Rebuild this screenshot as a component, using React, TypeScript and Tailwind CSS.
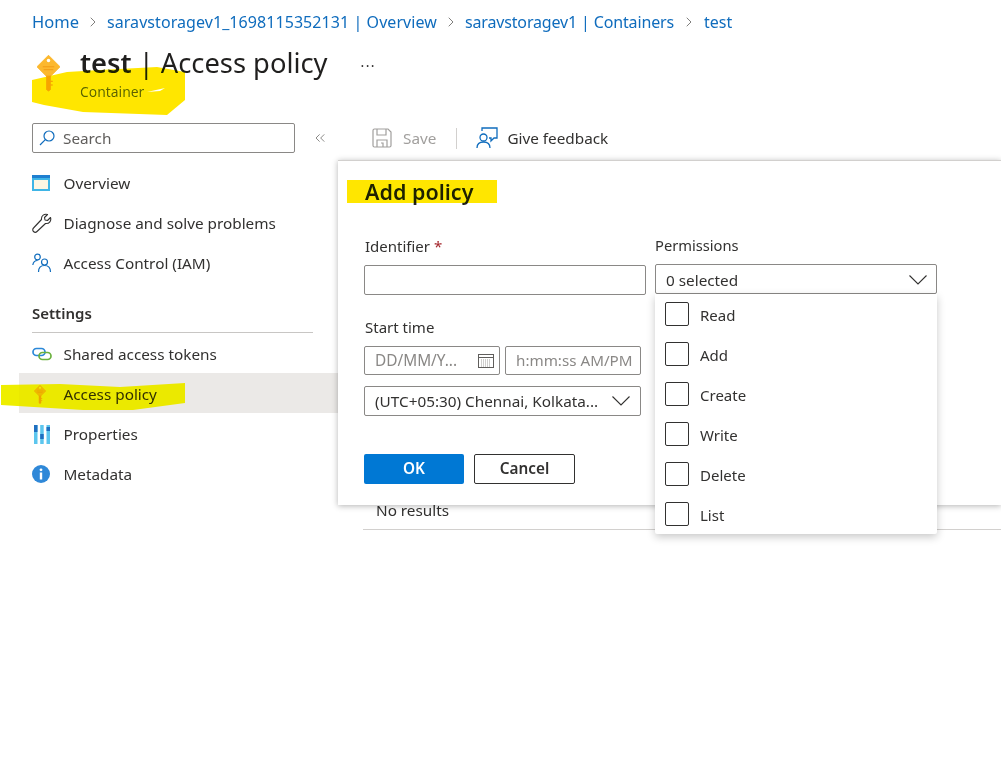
import { ChevronRight, ChevronsLeft } from "lucide-react"

const font = { fontFamily: '"Noto Sans", "Open Sans", sans-serif' }

function KeyIcon({ className }: { className: string }) {
  return (
    <svg viewBox="0 0 24 38" className={className}>
      <path d="M12 0 L24 12 L12 24 L0 12 Z" fill="#fcb82e" stroke="#fcb82e" strokeWidth="1" strokeLinejoin="round" />
      <circle cx="12" cy="5.5" r="1.8" fill="#fff" />
      <path d="M6 12h12M7 15h10" stroke="#f29a13" strokeWidth="1" />
      <path d="M9.5 21h5v15l-2.5 2-2.5-2z" fill="#f7a41d" />
      <path d="M14 27h2.5M14 31h2.5" stroke="#f7a41d" strokeWidth="1.5" />
    </svg>
  )
}

function SearchIcon() {
  return (
    <svg viewBox="0 0 16 16" className="mr-2 h-4 w-4 shrink-0" fill="none" stroke="#0f6cbd" strokeWidth="1.2">
      <circle cx="10" cy="6" r="5" />
      <path d="M6.300 9.700 1 15" />
    </svg>
  )
}

function Caret() {
  return (
    <svg viewBox="0 0 18 10" className="h-[10px] w-[18px] shrink-0" fill="none" stroke="#323130" strokeWidth="1.100">
      <path d="M.5 .5 9 9 17.500 .5" />
    </svg>
  )
}

function OverviewIcon() {
  return (
    <svg viewBox="0 0 18 16" className="h-4 w-[18px]">
      <rect width="18" height="16" fill="#3fb5e6" />
      <rect width="18" height="3" fill="#1f7fd0" />
      <rect x="2" y="5" width="14" height="9" fill="#fdf6e3" />
    </svg>
  )
}

function WrenchIcon() {
  return (
    <svg viewBox="0 0 20 20" className="h-5 w-5" fill="none" stroke="#323130" strokeWidth="1.100">
      <path d="M18.500 4.500 15.500 7.500 13 7 12.500 4.500 15.500 1.500C12.500 .5 9 2.500 9.500 6.500L1.500 15C.5 16 .5 17.500 1.500 18.500S4 19.500 5 18.500L13.500 10.500C17.500 11 19.500 7.500 18.500 4.500Z" strokeLinejoin="round" />
    </svg>
  )
}

function PeopleIcon() {
  return (
    <svg viewBox="0 0 20 20" className="h-5 w-5" fill="none" stroke="#0f6cbd" strokeWidth="1.200">
      <circle cx="5.500" cy="4" r="2.800" />
      <path d="M.8 12c.5-3 2-4.500 4.700-4.500" />
      <circle cx="12.500" cy="9" r="3" />
      <path d="M6.500 19c0-4 2-6.500 6-6.500s6 2.500 6 6.500" />
    </svg>
  )
}

function LinkIcon() {
  return (
    <svg viewBox="0 0 20 14" className="h-[14px] w-5" fill="none" strokeWidth="1.700">
      <rect x="1" y="1.500" width="12" height="7" rx="3.500" stroke="#2b88d8" />
      <rect x="7" y="5.500" width="12" height="7" rx="3.500" stroke="#6bb13f" />
    </svg>
  )
}

function PropertiesIcon() {
  return (
    <svg viewBox="0 0 16 19" className="ml-[2px] h-[19px] w-4">
      <rect x="0" y="0" width="3.500" height="19" fill="#5cc6ee" />
      <rect x="0" y="0" width="3.500" height="7" fill="#1f6fc0" />
      <rect x="6.200" y="0" width="3.500" height="19" fill="#5cc6ee" />
      <rect x="6.200" y="9" width="3.500" height="5" fill="#1f6fc0" />
      <rect x="12.500" y="0" width="3.500" height="19" fill="#5cc6ee" />
      <rect x="12.500" y="2" width="3.500" height="4" fill="#1f6fc0" />
    </svg>
  )
}

function InfoIcon() {
  return (
    <svg viewBox="0 0 18 18" className="h-[18px] w-[18px]">
      <circle cx="9" cy="9" r="9" fill="#2f88d8" />
      <circle cx="9" cy="4.800" r="1.400" fill="#fff" />
      <rect x="7.800" y="7.500" width="2.400" height="7" fill="#fff" />
    </svg>
  )
}

function SaveIcon() {
  return (
    <svg viewBox="0 0 20 20" className="h-5 w-5" fill="none" stroke="#a19f9d" strokeWidth="1.200">
      <path d="M1 2.500A1.500 1.500 0 0 1 2.500 1H16l3 3v13.500a1.500 1.500 0 0 1-1.500 1.500h-15A1.500 1.500 0 0 1 1 17.500Z" />
      <path d="M5 1v6h9V1M5 19v-7h10v7M9 15h2v4" />
    </svg>
  )
}

function FeedbackIcon() {
  return (
    <svg viewBox="0 0 22 22" className="h-[22px] w-[22px]" fill="none" stroke="#0f6cbd" strokeWidth="1.300">
      <circle cx="7.500" cy="10.500" r="3.500" />
      <path d="M1 21c0-4 2.500-6 6.500-6s6.500 2 6.500 6" />
      <path d="M6 4V1h15v10h-3l-3 3v-3h-2" />
    </svg>
  )
}

function CalendarIcon() {
  return (
    <svg viewBox="0 0 16 15" className="h-[15px] w-4" fill="none" stroke="#605e5c" strokeWidth="1">
      <rect x=".5" y="1.500" width="15" height="13" />
      <path d="M.5 4.500h15" />
      <path d="M3 7h10M3 9h10M3 11h10M3 13h10" stroke="#a19f9d" strokeDasharray="1 1" />
    </svg>
  )
}

function NavItem({ icon, label, active, low }: { icon: React.ReactNode; label: string; active?: boolean; low?: boolean }) {
  return (
    <div className={`ml-[19px] flex h-10 items-center ${low ? "pt-[2px]" : ""} ${active ? "bg-[#ebe9e7]" : ""}`}>
      <div className="ml-[13px] flex w-[31.500px] shrink-0 items-center">{icon}</div>
      <span className="text-[15.300px] text-[#323130]">{label}</span>
    </div>
  )
}

function FieldBox({ className, children }: { className: string; children?: React.ReactNode }) {
  return <div className={`flex items-center rounded-[2px] border border-[#8a8886] ${className}`}>{children}</div>
}

const crumbs = [
  { label: "saravstoragev1_1698115352131 | Overview", cls: "tracking-[0.07px]", chevron: "mx-[6px]" },
  { label: "saravstoragev1 | Containers", cls: "tracking-[-0.15px]", chevron: "mx-[6px]" },
  { label: "test", cls: "", chevron: "mx-[7px]" },
]
const permissions = ["Read", "Add", "Create", "Write", "Delete", "List"]

export default function App() {
  return (
    <div style={font} className="relative h-[776px] w-[1001px] overflow-hidden bg-white">
      {/* Breadcrumb */}
      <div className="flex h-11 items-center pl-8 text-[16px] text-[#0f6cbd]">
        <span className="text-[16.500px]">Home</span>
        {crumbs.map((c) => (
          <span key={c.label} className={`flex items-center ${c.cls}`}>
            <ChevronRight className={`h-4 w-4 text-[#605e5c] ${c.chevron}`} strokeWidth={1.200} />
            {c.label}
          </span>
        ))}
      </div>

      {/* Title */}
      <div className="flex h-[63px] items-start pl-[37px]">
        <KeyIcon className="mt-[11px] h-[37px] w-[23px]" />
        <div className="ml-5">
          <div className="flex items-center">
            <h1 className="text-[27.300px] leading-[38px] text-[#201f1e]">
              <b className="font-semibold">test</b> | Access policy
            </h1>
            <span className="ml-[33px] mt-[6px] text-sm tracking-widest text-[#323130]">···</span>
          </div>
          <div className="mt-px text-[13.900px] leading-[18px] text-[#605e5c]">Container</div>
        </div>
      </div>

      <div className="flex">
        {/* Sidebar */}
        <aside className="w-[338px] shrink-0 pt-4">
          <div className="flex items-center pl-8">
            <div className="flex h-[30px] w-[263px] items-center rounded-[2px] border border-[#8a8886] pl-[6px] text-[15.300px] text-[#605e5c]">
              <SearchIcon />
              Search
            </div>
            <ChevronsLeft className="ml-[17px] h-4 w-4 text-[#605e5c]" strokeWidth={1.100} />
          </div>
          <div className="mt-[10px]">
            <NavItem icon={<OverviewIcon />} label="Overview" />
            <NavItem icon={<WrenchIcon />} label="Diagnose and solve problems" />
            <NavItem icon={<PeopleIcon />} label="Access Control (IAM)" />
          </div>
          <div className="ml-8 mt-[20px] h-[30px] w-[281px] border-b border-[#c8c6c4] text-[15px] font-semibold leading-5 text-[#323130]">
            Settings
          </div>
          <div>
            <NavItem icon={<LinkIcon />} label="Shared access tokens" low />
            <NavItem icon={<KeyIcon className="ml-[2px] h-[19px] w-3" />} label="Access policy" active low />
            <NavItem icon={<PropertiesIcon />} label="Properties" low />
            <NavItem icon={<InfoIcon />} label="Metadata" low />
          </div>
        </aside>

        {/* Main column, mostly covered by the dialog */}
        <main className="flex-1 pt-[12px]">
          <div className="flex h-[38px] items-center pl-[34px] text-[15.300px]">
            <SaveIcon />
            <span className="ml-[11px] text-[#a19f9d]">Save</span>
            <div className="mx-[19.500px] h-[21px] w-px bg-[#d2d0ce]" />
            <FeedbackIcon />
            <span className="ml-[9px] text-[#323130]">Give feedback</span>
          </div>
          <div className="ml-[25px] mt-[341px] h-[32px] border-b border-[#d2d0ce] pl-[13px] pt-[2px] text-[15.300px] leading-5 text-[#323130]">
            No results
          </div>
        </main>
      </div>

      {/* Add policy dialog */}
      <div className="absolute left-[338px] top-[160px] h-[345px] w-[663px] border-t border-[#d2d0ce] bg-white pl-[26px] shadow-[0_1px_6px_rgba(0,0,0,0.3)]">
        <h2 className="ml-px mt-[17px] text-[21.500px] font-semibold leading-7 text-[#201f1e]">Add policy</h2>
        <div className="mt-[30px] flex gap-[9px]">
          <div className="w-[282px]">
            <div className="ml-px h-[29px] text-[15px] leading-5 text-[#323130]">
              Identifier <span className="text-[#a4262c]">*</span>
            </div>
            <FieldBox className="h-[30px] w-[282px]" />
            <div className="ml-px mt-[22px] h-[29px] text-[15px] leading-5 text-[#323130]">Start time</div>
            <div className="flex gap-[5px]">
              <FieldBox className="h-[29px] w-[136px] justify-between pl-[10px] pr-[5px] text-[15.400px] text-[#8a8886]">
                DD/MM/Y...
                <CalendarIcon />
              </FieldBox>
              <FieldBox className="h-[29px] w-[136px] pl-[10px] text-[15.200px] whitespace-nowrap text-[#8a8886]">h:mm:ss AM/PM</FieldBox>
            </div>
            <FieldBox className="mt-[11px] h-[30px] w-[277px] justify-between pl-[10px] pr-[10px] text-[15.300px] text-[#323130]">
              (UTC+05:30) Chennai, Kolkata...
              <Caret />
            </FieldBox>
            <div className="mt-[38px] flex gap-[10px]">
              <button className="h-[30px] w-[100px] rounded-[2px] bg-[#0078d4] pb-[2px] text-[15.300px] font-semibold text-white">OK</button>
              <button className="h-[30px] w-[101px] rounded-[2px] border border-[#323130] pb-[2px] text-[15.300px] font-semibold text-[#323130]">Cancel</button>
            </div>
          </div>
        </div>
      </div>

      {/* Permissions select + open menu */}
      <div className="absolute left-[655px] top-[236px] w-[282px]">
        <div className="h-[28px] text-[14.700px] leading-[19px] text-[#323130]">Permissions</div>
        <FieldBox className="h-[30px] justify-between pl-[10px] pr-[9px] pt-[2px] text-[15.300px] text-[#323130]">
          0 selected
          <Caret />
        </FieldBox>
        <div className="rounded-b-[2px] bg-white shadow-[0_3px_8px_rgba(0,0,0,0.22)]">
          {permissions.map((p) => (
            <div key={p} className="flex h-10 items-center pl-[10px] text-[15px] text-[#323130]">
              <div className="h-6 w-6 rounded-[2px] border border-[#323130]" />
              <span className="ml-[11px] mt-[3px]">{p}</span>
            </div>
          ))}
        </div>
      </div>

      {/* Marker highlights drawn over the screenshot */}
      <svg className="pointer-events-none absolute left-0 top-0 h-[776px] w-[1001px] mix-blend-darken" viewBox="0 0 1001 776">
        <path d="M32 80 67 72 100 70 157 67 185 72 185 100 167 115 83 112 44 105 32 102Z" fill="#ffe600" />
        <path d="M147 92 165 88 160 91Z" fill="#fff" />
        <path d="M1 385 60 384 120 387 185 383 185 403 133 410 83 410 1 405Z" fill="#eeee00" />
        <rect x="347" y="180" width="150" height="23" fill="#ffe600" />
      </svg>
    </div>
  )
}
